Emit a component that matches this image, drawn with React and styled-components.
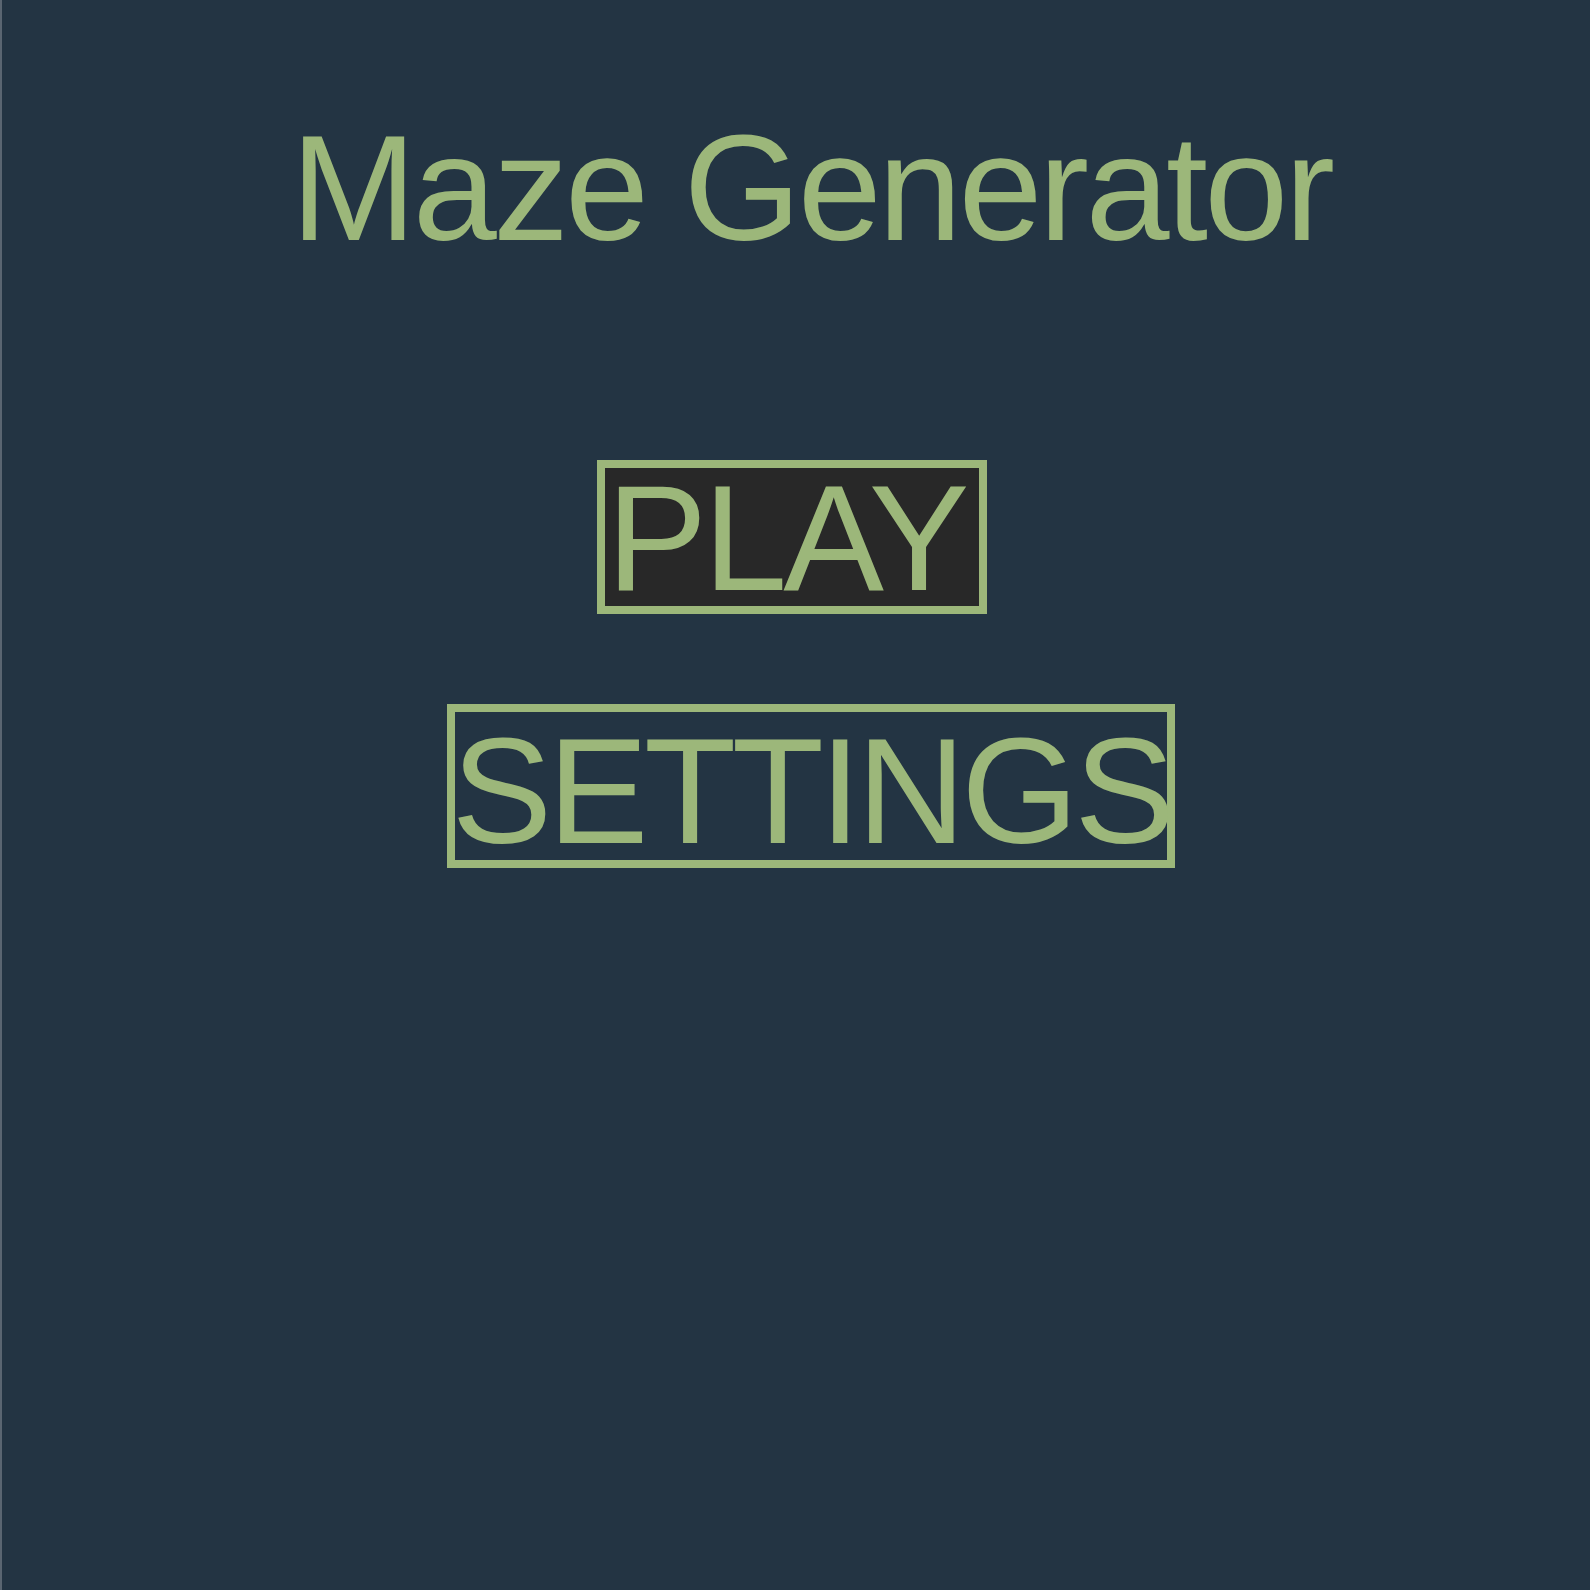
import React from "react";
import styled, { createGlobalStyle } from "styled-components";

const GlobalStyle = createGlobalStyle`
  html, body {
    margin: 0;
    padding: 0;
    background: #233443;
  }
  body {
    font-family: "Liberation Sans", Arial, Helvetica, sans-serif;
  }
`;

const Page = styled.div`
  box-sizing: border-box;
  min-height: 1590px;
  border-left: 2px solid #5a6571;
  padding: 112px 0 0 30px;
  display: flex;
  flex-direction: column;
  align-items: center;
  color: #9cb77a;
`;

const Title = styled.h1`
  margin: 0 0 197px 0;
  font-size: 151px;
  line-height: 151px;
  font-weight: 400;
  letter-spacing: -3.6px;
  white-space: nowrap;
`;

const Menu = styled.div`
  display: flex;
  flex-direction: column;
  align-items: center;
  gap: 90px;
`;

const MenuButton = styled.button`
  box-sizing: border-box;
  display: flex;
  justify-content: center;
  width: ${(p) => p.$width}px;
  height: ${(p) => p.$height}px;
  margin-right: ${(p) => p.$shift}px;
  padding: ${(p) => p.$padTop}px ${(p) => p.$padRight}px 0 0;
  border: 8px solid #9cb77a;
  background: ${(p) => p.$bg};
  color: #9cb77a;
  font-family: inherit;
  font-size: 151px;
  line-height: ${(p) => p.$lineHeight}px;
  letter-spacing: ${(p) => p.$spacing}px;
  white-space: nowrap;
  overflow: visible;
  cursor: pointer;
`;

export default function App() {
  return (
    <>
      <GlobalStyle />
      <Page>
        <Title>Maze Generator</Title>
        <Menu>
          <MenuButton
            $width={390}
            $height={154}
            $shift={38}
            $padTop={2}
            $padRight={12}
            $lineHeight={135}
            $spacing={-4}
            $bg="#282828"
          >
            PLAY
          </MenuButton>
          <MenuButton
            $width={728}
            $height={164}
            $shift={0}
            $padTop={9}
            $padRight={0}
            $lineHeight={139}
            $spacing={-4.5}
            $bg="transparent"
          >
            SETTINGS
          </MenuButton>
        </Menu>
      </Page>
    </>
  );
}
